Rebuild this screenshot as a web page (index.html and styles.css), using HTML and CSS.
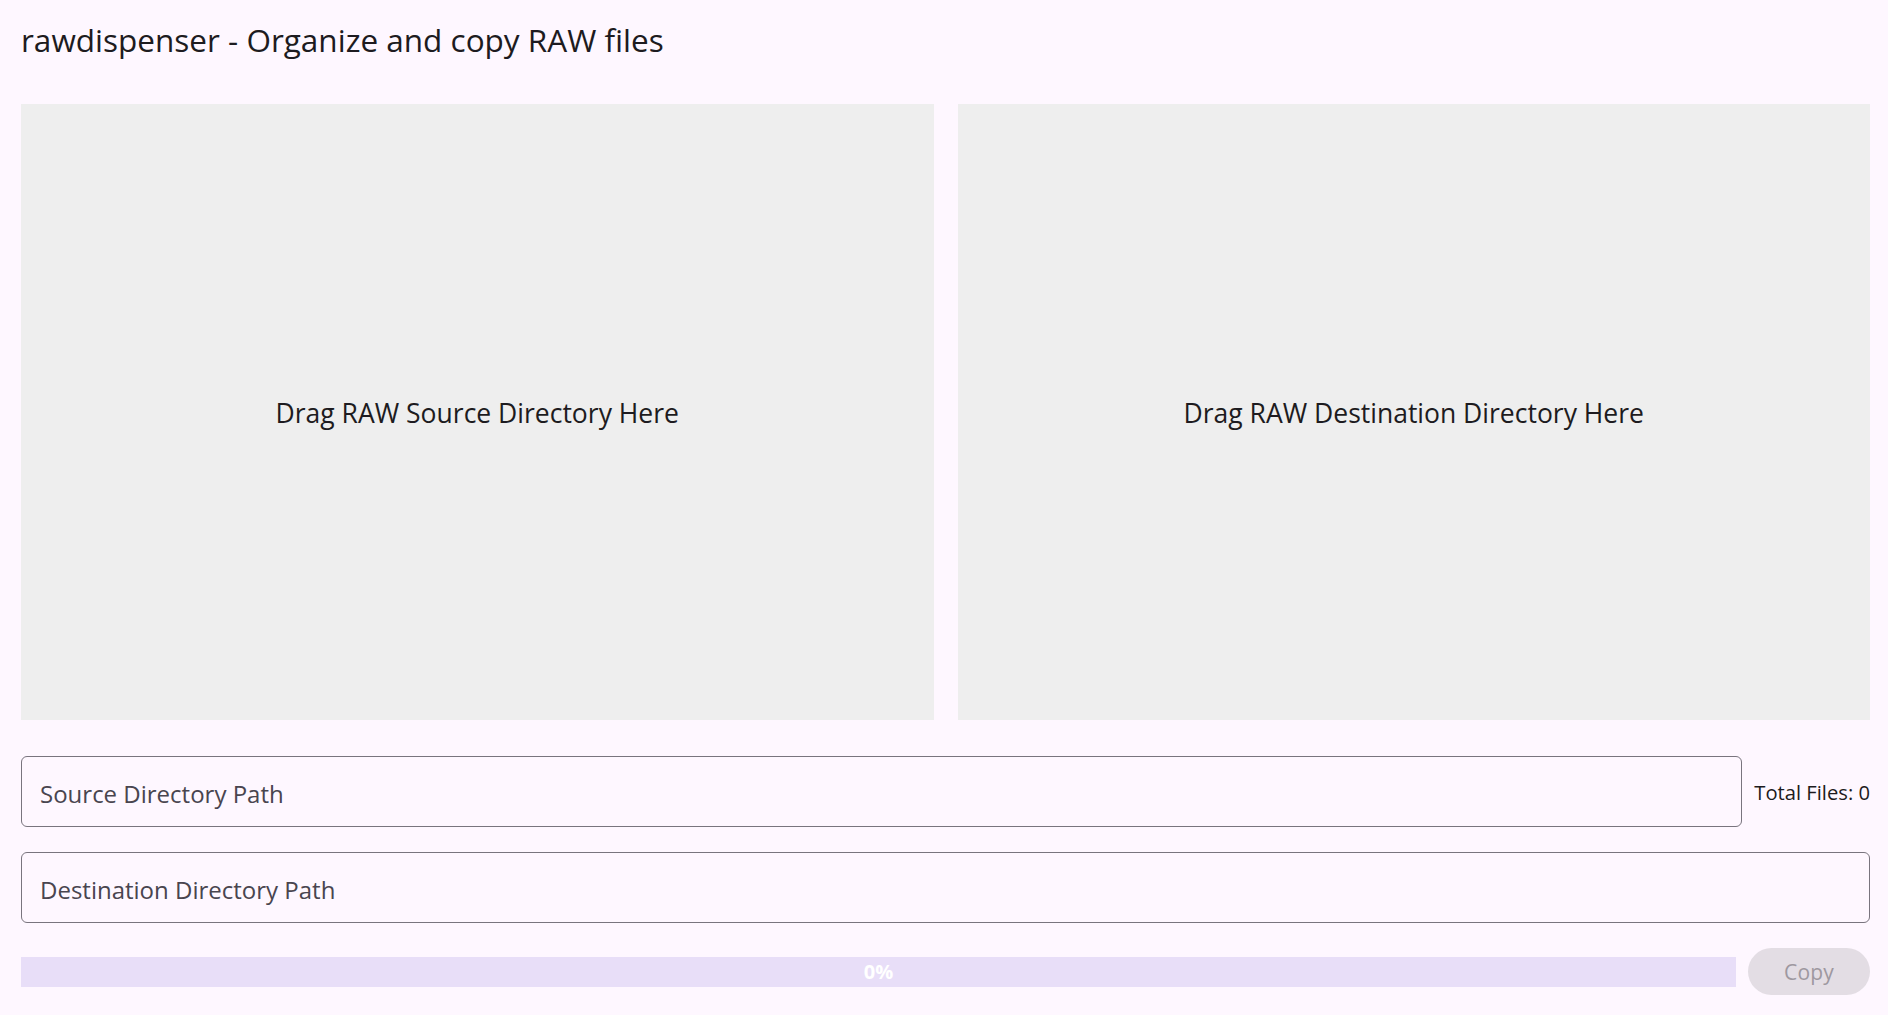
FILE: index.html
```html
<!DOCTYPE html>
<html lang="en">
<head>
<meta charset="utf-8">
<title>rawdispenser</title>
<link rel="stylesheet" href="styles.css">
</head>
<body>
<div class="app">
  <header class="header">
    <h1 class="title">rawdispenser - Organize and copy RAW files</h1>
  </header>
  <div class="drops">
    <div class="drop">Drag RAW Source Directory Here</div>
    <div class="drop">Drag RAW Destination Directory Here</div>
  </div>
  <div class="row row-source">
    <div class="field"><span class="placeholder">Source Directory Path</span></div>
    <div class="total">Total Files: 0</div>
  </div>
  <div class="row row-dest">
    <div class="field"><span class="placeholder">Destination Directory Path</span></div>
  </div>
  <div class="row row-progress">
    <div class="progress"><span class="progress-label">0%</span></div>
    <button class="copy" disabled>Copy</button>
  </div>
</div>
</body>
</html>
```

FILE: styles.css
```css
* { box-sizing: border-box; }
html, body {
  margin: 0;
  padding: 0;
  background: #fef7ff;
}
body {
  font-family: "Open Sans", "Noto Sans", sans-serif;
  color: #1d1b20;
}
.app {
  height: 1015px;
  display: flex;
  flex-direction: column;
  padding: 0 18px 20px 21px;
}
.header {
  height: 104px;
  padding-top: 18px;
  flex: none;
}
.title {
  margin: 0;
  font-size: 31.5px;
  line-height: 44px;
  font-weight: 400;
  color: #1d1b20;
}
.drops {
  flex: 1;
  display: flex;
  gap: 24px;
  min-height: 0;
}
.drop {
  flex: 1;
  background: #eeeeee;
  display: flex;
  align-items: center;
  justify-content: center;
  padding-top: 2px;
  font-size: 26.5px;
  color: #1d1b20;
}
.row {
  display: flex;
  align-items: center;
  flex: none;
}
.row-source { margin-top: 36px; }
.row-dest { margin-top: 25px; }
.row-progress { margin-top: 25px; gap: 12px; }
.field {
  flex: 1;
  height: 71px;
  border: 1.5px solid #79747e;
  border-radius: 6px;
  padding: 4px 18px 0;
  display: flex;
  align-items: center;
}
.placeholder {
  font-size: 24px;
  letter-spacing: 0;
  color: #49454f;
}
.total {
  margin-left: 12px;
  font-size: 20.2px;
  color: #1d1b20;
}
.progress {
  flex: 1;
  height: 30px;
  background: #e8def8;
  display: flex;
  align-items: center;
  justify-content: center;
}
.progress-label {
  color: #ffffff;
  font-weight: 700;
  font-size: 20px;
}
.copy {
  width: 122px;
  height: 47px;
  border: none;
  border-radius: 24px;
  background: #e3dde4;
  color: #9e98a0;
  font-family: inherit;
  font-size: 21px;
  font-weight: 500;
  letter-spacing: 0.15px;
  padding: 0;
}
```
